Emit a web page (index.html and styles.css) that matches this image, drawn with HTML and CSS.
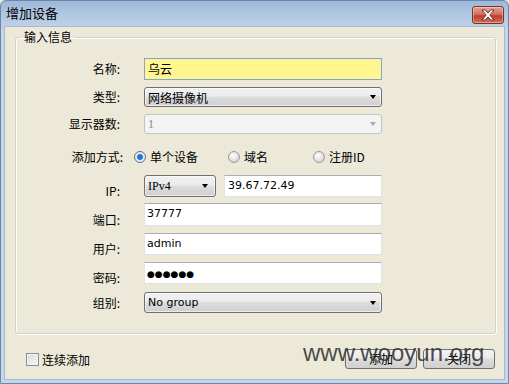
FILE: index.html
```html
<!DOCTYPE html>
<html lang="zh-CN">
<head>
    <meta charset="UTF-8">
    <meta name="viewport" content="width=device-width, initial-scale=1.0">
    <title>增加设备</title>
    <link rel="stylesheet" href="styles.css">
</head>
<body>
    <!-- janela principal -->
    <div class="window">
        <div class="titlebar">
            <span class="title">增加设备</span>
            <button class="btn-fechar" aria-label="关闭">
                <svg width="16" height="12" viewBox="0 0 16 12">
                    <path d="M2 1 L5.2 1 L8 4 L10.8 1 L14 1 L9.8 6 L14 11 L10.8 11 L8 8 L5.2 11 L2 11 L6.2 6 Z" fill="#fff" stroke="#6b2a22" stroke-width="0.9" stroke-linejoin="round"/>
                </svg>
            </button>
        </div>

        <div class="conteudo">
            <fieldset class="grupo">
                <legend>输入信息</legend>

                <div class="linha linha-nome">
                    <label class="rotulo">名称:</label>
                    <div class="campo campo-nome">乌云</div>
                </div>

                <div class="linha linha-tipo">
                    <label class="rotulo">类型:</label>
                    <div class="combo"><span>网络摄像机</span><i class="seta"></i></div>
                </div>

                <div class="linha linha-tela">
                    <label class="rotulo">显示器数:</label>
                    <div class="combo combo-off"><span>1</span><i class="seta"></i></div>
                </div>

                <div class="linha linha-modo">
                    <label class="rotulo">添加方式:</label>
                    <div class="radios">
                        <span class="opcao opcao-1"><i class="radio marcado"></i>单个设备</span>
                        <span class="opcao opcao-2"><i class="radio"></i>域名</span>
                        <span class="opcao"><i class="radio"></i>注册ID</span>
                    </div>
                </div>

                <div class="linha linha-ip">
                    <label class="rotulo rotulo-baixo">IP:</label>
                    <div class="ip">
                        <div class="combo combo-ip"><span>IPv4</span><i class="seta"></i></div>
                        <div class="campo campo-ip">39.67.72.49</div>
                    </div>
                </div>

                <div class="linha linha-porta">
                    <label class="rotulo rotulo-baixo">端口:</label>
                    <div class="campo">37777</div>
                </div>

                <div class="linha linha-usuario">
                    <label class="rotulo rotulo-baixo">用户:</label>
                    <div class="campo">admin</div>
                </div>

                <div class="linha linha-senha">
                    <label class="rotulo rotulo-baixo">密码:</label>
                    <div class="campo campo-senha">●●●●●●</div>
                </div>

                <div class="linha linha-grupo">
                    <label class="rotulo">组别:</label>
                    <div class="combo"><span>No group</span><i class="seta"></i></div>
                </div>
            </fieldset>

            <!-- rodape com checkbox e botoes -->
            <div class="rodape">
                <span class="continuo"><i class="check"></i>连续添加</span>
                <div class="botoes">
                    <button class="botao">添加</button>
                    <button class="botao">关闭</button>
                </div>
            </div>

            <div class="marca">www.wooyun.org</div>
        </div>
    </div>
</body>
</html>
```

FILE: styles.css
```css
/* reset basico */
* {
  margin: 0;
  padding: 0;
  box-sizing: border-box;
}

body {
  width: 509px;
  height: 384px;
  overflow: hidden;
  font-family: "Noto Sans CJK SC", "Liberation Sans", sans-serif;
  font-size: 12px;
  color: #000;
  background: #ece9d8;
}

.window {
  width: 509px;
  height: 384px;
  display: flex;
  flex-direction: column;
  background: linear-gradient(to bottom, #9fb8d9, #c4d7ec 30px, #c4d7ec);
  border: 1px solid #6d87a8;
  border-radius: 6px 6px 0 0;
  padding: 0 3px 3px;
}

.titlebar {
  height: 25px;
  display: flex;
  align-items: center;
  justify-content: space-between;
  padding: 0 1px 2px 2px;
}

.title {
  font-size: 13px;
  line-height: 16px;
  color: #000;
}

.btn-fechar {
  width: 32px;
  height: 18px;
  margin-top: 4px;
  display: flex;
  align-items: center;
  justify-content: center;
  border: 1px solid #7a3128;
  border-radius: 3px;
  background: linear-gradient(to bottom, #e4a597, #d0705f 45%, #bd3f2c 55%, #d66c58);
  box-shadow: inset 0 0 0 1px rgba(255, 255, 255, 0.35);
}

.conteudo {
  position: relative;
  flex: 1;
  background: #ece9d8;
  border: 1px solid #a9b8cb;
  padding: 2px 0 0 10px;
}

.grupo {
  width: 481px;
  height: 305px;
  border: 1px solid #d3d1c6;
  border-radius: 3px;
  box-shadow: inset 1px 1px 0 #fff, 1px 1px 0 #fff;
  padding: 0;
}

.grupo legend {
  margin-left: 5px;
  padding: 0 3px;
  font-size: 12px;
  line-height: 16px;
}

.linha {
  display: flex;
  align-items: center;
  column-gap: 24px;
}

.rotulo {
  width: 104px;
  text-align: right;
  line-height: 16px;
}

.rotulo-baixo {
  align-self: flex-end;
  margin-bottom: -2px;
}

.linha-nome { margin-top: 13px; height: 22px; }
.linha-tipo { margin-top: 7px; height: 20px; }
.linha-tela { margin-top: 7px; height: 20px; }
.linha-modo { margin-top: 16px; height: 14px; column-gap: 11px; }
.linha-modo .rotulo { width: 107px; }
.linha-ip { margin-top: 11px; height: 22px; }
.linha-porta { margin-top: 6px; height: 23px; }
.linha-usuario { margin-top: 7px; height: 22px; }
.linha-senha { margin-top: 7px; height: 22px; }
.linha-grupo { margin-top: 8px; height: 21px; }

/* campos de texto */
.campo {
  width: 238px;
  height: 100%;
  background: #fff;
  border: 1px solid #dfe3e8;
  border-top-color: #abadb3;
  border-left-color: #e2e3ea;
  padding: 3px 0 0 2px;
  font-family: "DejaVu Sans", sans-serif;
  font-size: 11px;
  line-height: 14px;
}

.campo-nome {
  background: #fff68f;
  border: 1px solid #7fa6d3;
  font-family: "Noto Sans CJK SC", sans-serif;
  font-size: 12px;
  line-height: 16px;
  padding: 2px 0 0 3px;
}

.campo-senha {
  font-size: 9px;
  padding-top: 4px;
}

/* combobox */
.combo {
  width: 238px;
  height: 100%;
  display: flex;
  align-items: center;
  justify-content: space-between;
  padding: 0 4px 0 3px;
  border: 1px solid #707070;
  border-radius: 3px;
  background: linear-gradient(to bottom, #f2f2f2, #ebebeb 45%, #dddddd 50%, #cfcfcf);
  box-shadow: inset 0 0 0 1px rgba(255, 255, 255, 0.6);
  font-size: 12px;
}

.linha-grupo .combo span {
  font-family: "DejaVu Sans", sans-serif;
  font-size: 11px;
}

.combo-ip span {
  font-family: "Liberation Serif", serif;
  font-size: 12px;
}

.seta {
  width: 0;
  height: 0;
  border-left: 3.5px solid transparent;
  border-right: 3.5px solid transparent;
  border-top: 4px solid #000;
  margin-right: 1px;
}

.combo-off {
  background: #f4f4f4;
  border-color: #c3c3c3;
  box-shadow: none;
  color: #888;
}

.combo-off span {
  font-family: "Liberation Serif", serif;
}

.combo-off .seta {
  border-top-color: #a8a8a8;
}

/* radios */
.radios {
  display: flex;
  align-items: center;
}

.opcao {
  display: flex;
  align-items: center;
  gap: 4px;
  line-height: 14px;
}

.opcao-1 { width: 94px; }
.opcao-2 { width: 85px; }

.radio {
  width: 12px;
  height: 12px;
  border-radius: 50%;
  border: 1px solid #9a9a9a;
  background: radial-gradient(circle at 40% 35%, #fff, #d8d8d8 70%, #c8c8c8);
}

.radio.marcado {
  background: radial-gradient(circle, #1b66c4 0, #2f7fd8 2.5px, #d9e6f3 3.5px, #eef2f7 5px);
  border-color: #5a6f86;
}

/* linha do IP */
.ip {
  width: 238px;
  height: 100%;
  display: flex;
  gap: 8px;
}

.combo-ip {
  width: 72px;
  flex: none;
  padding-right: 6px;
}

.campo-ip {
  flex: 1;
  width: auto;
  padding-left: 3px;
}

/* rodape */
.rodape {
  display: flex;
  align-items: center;
  justify-content: space-between;
  margin-top: 15px;
  padding: 0 9px 0 11px;
  height: 20px;
}

.continuo {
  display: flex;
  align-items: center;
  gap: 3px;
}

.check {
  width: 13px;
  height: 13px;
  border: 1px solid #8f8f8f;
  background: linear-gradient(135deg, #dcdcdc, #f6f6f6);
  box-shadow: inset 0 0 0 1px #f2f2f2;
}

.botoes {
  display: flex;
  gap: 6px;
}

.botao {
  width: 72px;
  height: 20px;
  border: 1px solid #707070;
  border-radius: 3px;
  background: linear-gradient(to bottom, #f2f2f2, #ebebeb 45%, #dddddd 50%, #cfcfcf);
  font-family: "Noto Sans CJK SC", sans-serif;
  font-size: 12px;
  line-height: 16px;
  color: #000;
}

/* marca d'agua por cima */
.marca {
  position: absolute;
  left: 298px;
  top: 314px;
  font-family: "Liberation Sans", sans-serif;
  font-size: 24px;
  line-height: 24px;
  color: rgba(45, 45, 45, 0.85);
  pointer-events: none;
}
```
